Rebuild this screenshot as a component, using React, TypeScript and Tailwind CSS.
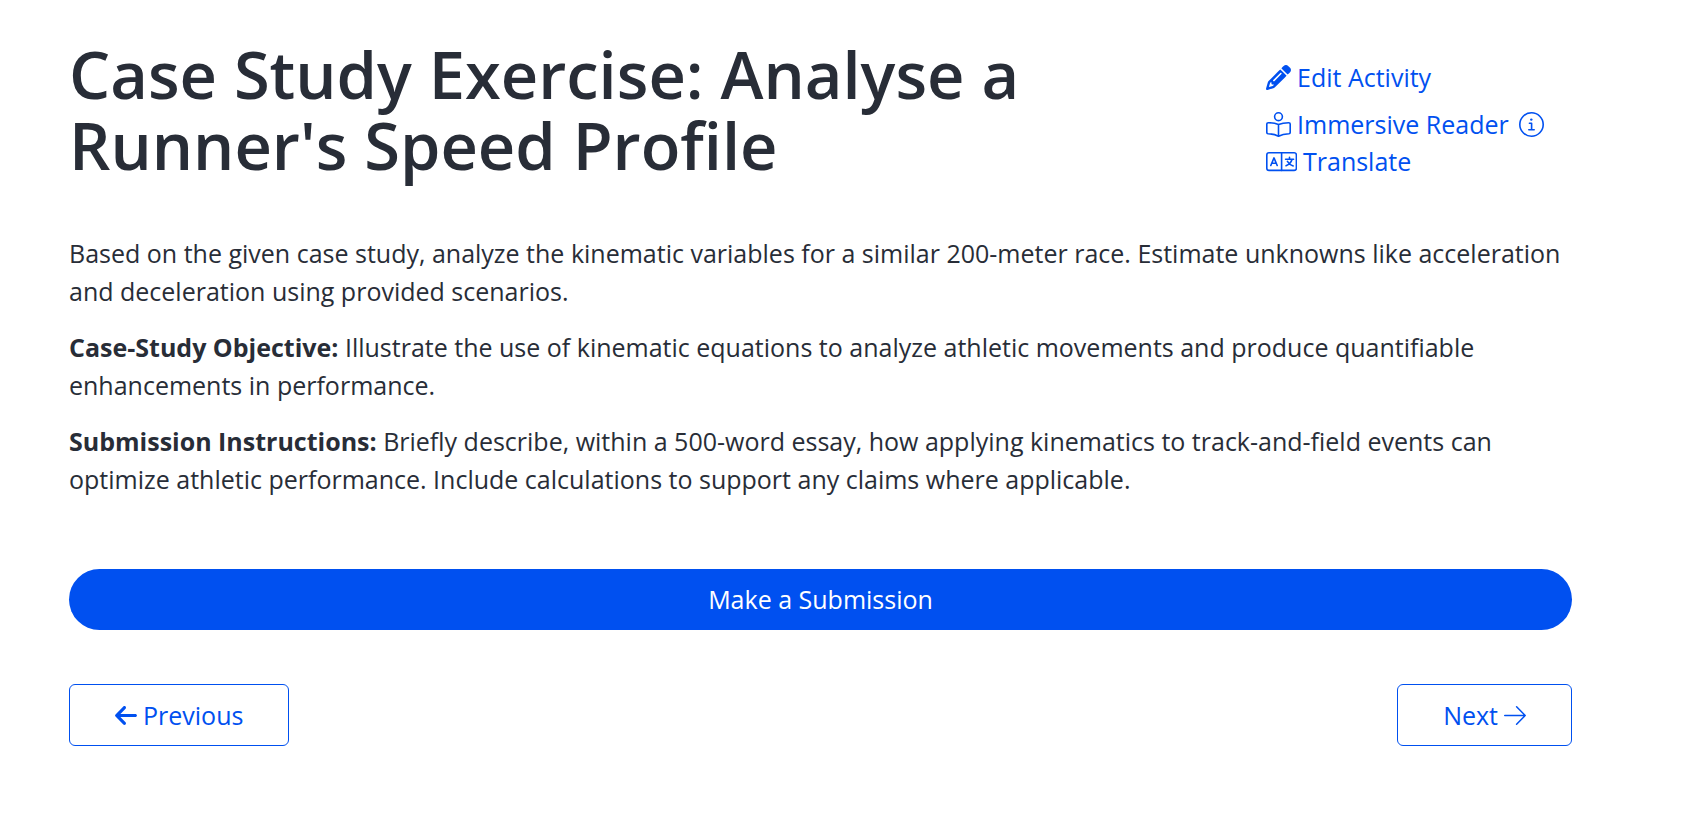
import React from 'react';
import { FaArrowLeft, FaPencil } from 'react-icons/fa6';

// Thin line icons
const lineProps = {
  fill: 'none',
  stroke: 'currentColor',
  strokeLinecap: 'round',
  strokeLinejoin: 'round',
  'aria-hidden': true
} as const;

function ReaderIcon() {
  return (
    <svg {...lineProps} viewBox="0 0 25 25" strokeWidth="1.6" className="h-[25px] w-[25px] shrink-0">
      <circle cx="12.5" cy="4.7" r="3.9" />
      <path d="M12.5 12.6C9.6 11.3 6 10.7 2.3 10.7C1.4 10.7 .8 11.2 .8 12V20.4C.8 21.2 1.3 21.6 2.1 21.7C6 21.9 9.6 22.7 12.5 24.2C15.4 22.7 19 21.9 22.9 21.7C23.7 21.6 24.2 21.2 24.2 20.4V12C24.2 11.2 23.6 10.7 22.7 10.7C19 10.7 15.4 11.3 12.5 12.6ZV24.2" />
    </svg>
  );
}

function InfoIcon() {
  return (
    <svg {...lineProps} viewBox="0 0 25 25" strokeWidth="1.6" className="h-[25px] w-[25px]">
      <circle cx="12.5" cy="12.5" r="11.7" />
      <path d="M10.4 11.2H12.6V17.8M9.8 17.8H15.2" />
      <circle cx="12.3" cy="7.6" r="1.2" fill="currentColor" stroke="none" />
    </svg>
  );
}

function TranslateIcon() {
  return (
    <svg {...lineProps} viewBox="0 0 31 25" strokeWidth="1.6" className="h-[25px] w-[31px] shrink-0">
      <rect x=".8" y="3.8" width="29.6" height="17.6" rx="2.2" />
      <path d="M15.6 3.8V21.4" />
      <path d="M4.8 16.5L8 8.9L11.2 16.5M5.9 14.3H10.1" />
      <path d="M19.6 10.3H27.6M23.5 8.4V10.3M26 10.5C25.2 13.4 23 15.6 20 16.7M21.4 12.4C22.6 14.4 24.8 16.2 27.2 16.9" />
    </svg>
  );
}

function ArrowRightIcon() {
  return (
    <svg {...lineProps} viewBox="0 0 22 25" strokeWidth="1.5" className="h-[25px] w-[22px]">
      <path d="M.7 12.5H21.2M12.6 3.7L21.2 12.5L12.6 21.3" />
    </svg>
  );
}

export default function ActivityPage() {
  return (
    <main className="bg-white pt-[39px] pb-16 pl-[69px] pr-[122px] font-['Open_Sans',sans-serif] text-[25px] leading-[37px] text-[#282d37]">
      {/* Title and tools */}
      <header className="flex items-start justify-between">
        <h1 className="max-w-[1080px] flex-1 text-[65px] leading-[71px] font-semibold">
          Case Study Exercise: Analyse a Runner's Speed Profile
        </h1>

        <nav className="flex w-[306px] shrink-0 flex-col items-start pt-5 text-[#0050f0]">
          <a href="#edit" className="mb-2.5 flex items-center gap-1.5">
            <FaPencil className="h-[25px] w-[25px]" />
            Edit Activity
          </a>
          <div className="flex items-center gap-2.5">
            <a href="#reader" className="flex items-center gap-1.5">
              <ReaderIcon />
              Immersive Reader
            </a>
            <button type="button" aria-label="About Immersive Reader">
              <InfoIcon />
            </button>
          </div>
          <a href="#translate" className="flex items-center gap-1.5">
            <TranslateIcon />
            Translate
          </a>
        </nav>
      </header>

      {/* Activity description */}
      <section className="mt-[53px] space-y-[18px] leading-[38px]">
        <p>
          Based on the given case study, analyze the kinematic variables for a similar 200-meter race. Estimate
          unknowns like acceleration and deceleration using provided scenarios.
        </p>
        <p>
          <strong className="font-bold">Case-Study Objective:</strong> Illustrate the use of kinematic equations to
          analyze athletic movements and produce quantifiable enhancements in performance.
        </p>
        <p>
          <strong className="font-bold">Submission Instructions:</strong> Briefly describe, within a 500-word essay,
          how applying kinematics to track-and-field events can optimize athletic performance. Include calculations
          to support any claims where applicable.
        </p>
      </section>

      <button type="button" className="mt-[71px] w-full rounded-full bg-[#0050f0] py-3 text-white">
        Make a Submission
      </button>

      {/* Pager */}
      <div className="mt-[54px] flex items-center justify-between leading-9 text-[#0050f0]">
        <a href="#previous" className="flex items-center gap-1.5 rounded-md border border-[#0050f0] px-[45px] py-3">
          <FaArrowLeft className="h-[25px] w-[22px]" />
          Previous
        </a>
        <a href="#next" className="flex items-center gap-1.5 rounded-md border border-[#0050f0] px-[45px] py-3">
          Next
          <ArrowRightIcon />
        </a>
      </div>
    </main>
  );
}
